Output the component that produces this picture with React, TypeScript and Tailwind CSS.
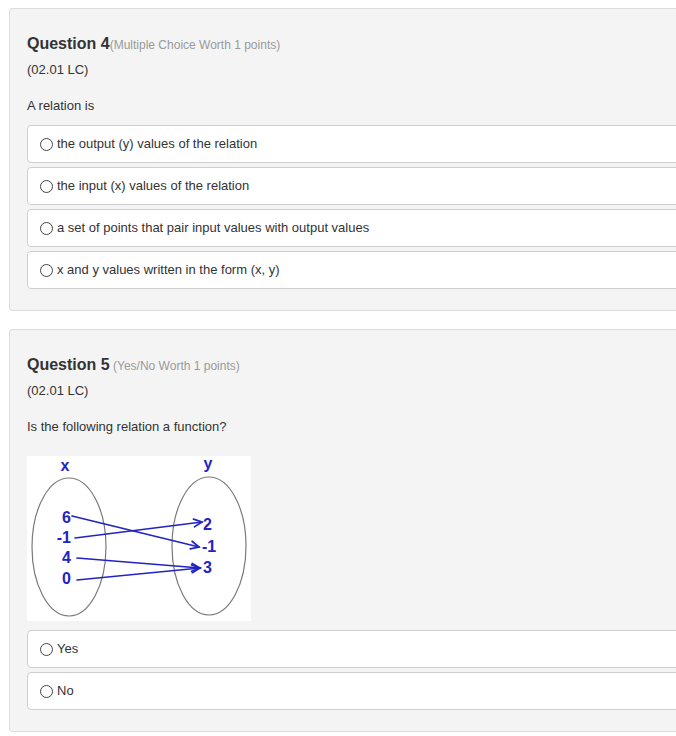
import React from "react";

interface Choice {
  label: string;
}

const BLUE = "#2323c4";

const Radio: React.FC = () => (
  <span className="inline-block w-[13px] h-[13px] rounded-full border border-[#444] bg-white shrink-0" />
);

const Options: React.FC<{ choices: Choice[] }> = ({ choices }) => (
  <div className="flex flex-col gap-[4px]">
    {choices.map((c) => (
      <div
        key={c.label}
        className="h-[38px] flex items-center gap-[4px] pl-[12px] bg-white border border-[#cfcfcf] rounded-[4px] -mr-6"
      >
        <Radio />
        <span className="text-[13px] text-[#333]">{c.label}</span>
      </div>
    ))}
  </div>
);

const Arrow: React.FC<{ x1: number; y1: number; x2: number; y2: number }> = ({
  x1,
  y1,
  x2,
  y2,
}) => {
  const a = Math.atan2(y2 - y1, x2 - x1);
  const len = 9;
  const spread = 0.45;
  const h1x = x2 - len * Math.cos(a - spread);
  const h1y = y2 - len * Math.sin(a - spread);
  const h2x = x2 - len * Math.cos(a + spread);
  const h2y = y2 - len * Math.sin(a + spread);
  return (
    <g stroke={BLUE} strokeWidth={1.7} fill="none" strokeLinecap="round">
      <line x1={x1} y1={y1} x2={x2} y2={y2} />
      <polyline points={`${h1x},${h1y} ${x2},${y2} ${h2x},${h2y}`} />
    </g>
  );
};

const MappingDiagram: React.FC = () => (
  <svg width={224} height={165} viewBox="0 0 224 165" className="block bg-white">
    <ellipse cx={42} cy={91} rx={37} ry={69} fill="none" stroke="#7a7a7a" strokeWidth={1.2} />
    <ellipse cx={182} cy={90} rx={37} ry={69} fill="none" stroke="#7a7a7a" strokeWidth={1.2} />
    <g fill={BLUE} fontFamily="'Liberation Sans', Arial, sans-serif" fontWeight="bold" fontSize={16}>
      <text x={38} y={15} textAnchor="middle">x</text>
      <text x={181} y={13} textAnchor="middle">y</text>
      <text x={44} y={67} textAnchor="end">6</text>
      <text x={44} y={87} textAnchor="end">-1</text>
      <text x={44} y={107} textAnchor="end">4</text>
      <text x={44} y={128} textAnchor="end">0</text>
      <text x={176} y={74}>2</text>
      <text x={175} y={96}>-1</text>
      <text x={176} y={117}>3</text>
    </g>
    <Arrow x1={45} y1={60} x2={172} y2={91} />
    <Arrow x1={48} y1={82} x2={175} y2={66} />
    <Arrow x1={50} y1={102} x2={173} y2={112} />
    <Arrow x1={50} y1={124} x2={173} y2={112} />
  </svg>
);

const Panel: React.FC<{
  number: number;
  kind: string;
  gap?: boolean;
  prompt: string;
  children: React.ReactNode;
}> = ({ number, kind, gap, prompt, children }) => (
  <div className="bg-[#f4f4f4] border border-[#dcdcdc] rounded-[3px] pt-[24px] pb-[21px] pl-[17px] -mr-8">
    <div className="leading-[22px] text-[#333]">
      <span className="text-[16px] font-bold">Question {number}</span>
      <span className="text-[12px] text-[#9a9a9a]">
        {gap ? " " : ""}({kind} Worth 1 points)
      </span>
    </div>
    <div className="mt-[5px] leading-[18px] text-[13px] text-[#333]">(02.01 LC)</div>
    <div className="mt-[18px] leading-[18px] text-[13px] text-[#333]">{prompt}</div>
    {children}
  </div>
);

export default function App() {
  return (
    <div
      className="w-full min-h-screen bg-white overflow-hidden pl-[9px] pt-[8px]"
      style={{ fontFamily: "'Liberation Sans', Arial, sans-serif" }}
    >
      <Panel number={4} kind="Multiple Choice" prompt="A relation is">
        <div className="mt-[10px]">
          <Options
            choices={[
              { label: "the output (y) values of the relation" },
              { label: "the input (x) values of the relation" },
              { label: "a set of points that pair input values with output values" },
              { label: "x and y values written in the form (x, y)" },
            ]}
          />
        </div>
      </Panel>
      <div className="mt-[18px]">
        <Panel number={5} kind="Yes/No" gap prompt="Is the following relation a function?">
          <div className="mt-[20px]">
            <MappingDiagram />
          </div>
          <div className="mt-[9px]">
            <Options choices={[{ label: "Yes" }, { label: "No" }]} />
          </div>
        </Panel>
      </div>
    </div>
  );
}
